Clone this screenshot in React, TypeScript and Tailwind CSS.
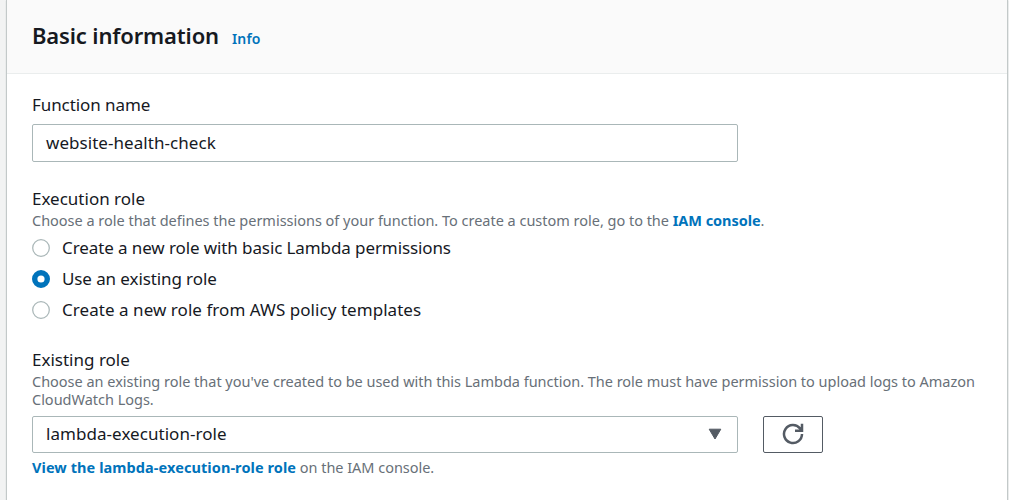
const options = [
  { label: 'Create a new role with basic Lambda permissions', checked: false, tracking: 'tracking-[-0.1px]' },
  { label: 'Use an existing role', checked: true, tracking: 'tracking-[-0.1px]' },
  { label: 'Create a new role from AWS policy templates', checked: false, tracking: 'tracking-[0.05px]' },
];

function Radio({ checked }: { checked: boolean }) {
  return (
    <svg className="mt-px h-[18px] w-[18px] shrink-0" viewBox="0 0 18 18">
      {checked ? (
        <circle cx="9" cy="9" r="6.300" fill="#fff" stroke="#0073bb" strokeWidth="5.400" />
      ) : (
        <circle cx="9" cy="9" r="8.300" fill="#fff" stroke="#aab7b8" strokeWidth="1.250" />
      )}
    </svg>
  );
}

export default function App() {
  return (
    <div className="flex h-[500px] w-[1009px] overflow-hidden bg-[#f2f3f3] font-['Noto_Sans','Open_Sans',sans-serif] text-[#16191f]">
      <main className="ml-[6px] flex w-[1002px] flex-col border-x border-[#c3c9c9] bg-white shadow-[0_1px_1px_0_rgba(0,28,36,0.2)]">
        <header className="flex h-[74px] items-baseline gap-[13px] border-b border-[#eaeded] bg-[#fafafa] pl-[25px] pt-[19px]">
          <h2 className="text-[22px] leading-[32px] font-semibold tracking-[-0.15px]">Basic information</h2>
          <a className="text-[14px] font-semibold tracking-[0.15px] text-[#0073bb]">Info</a>
        </header>
        <section className="flex flex-col pl-[25px] pt-[18px] whitespace-nowrap">
          <label className="text-[17px] leading-[26px] tracking-[-0.07px]">Function name</label>
          <div className="mt-[6px] flex h-[38px] w-[706px] items-center rounded-[2px] border border-[#aab7b8] pl-[13px] text-[17px] tracking-[0.05px]">
            website-health-check
          </div>

          <div className="mt-6 text-[17px] leading-[26px]">Execution role</div>
          <p className="-mt-px mb-px text-[14.5px] leading-[18px] tracking-[-0.015px] text-[#687078]">
            <span>Choose a role that defines the permissions of your function. To create a custom role, go to the </span>
            <a className="font-bold tracking-[-0.05px] text-[#0073bb]">IAM console</a>.
          </p>
          <div className="mt-[2px] flex h-[94px] flex-col">
            {options.map((o) => (
              <div key={o.label} className="flex h-[31.2px] items-center gap-3 text-[17px]">
                <Radio checked={o.checked} />
                <span className={o.tracking}>{o.label}</span>
              </div>
            ))}
          </div>

          <div className="mt-[21px] text-[17px] leading-[26px]">Existing role</div>
          <p className="-mt-px mb-px text-[14.5px] leading-[18px] tracking-[-0.015px] text-[#687078]">
            <span>Choose an existing role that you've created to be used with this Lambda function. The role must have permission to upload logs to Amazon</span>
            <br />
            <span>CloudWatch Logs.</span>
          </p>
          <div className="mt-[7px] flex gap-[25px]">
            <div className="flex h-[37px] w-[706px] items-center justify-between rounded-[2px] border border-[#aab7b8] pl-[13px] pr-[15px] text-[17px]">
              <span className="pb-[2px] tracking-[0.05px]">lambda-execution-role</span>
              <svg className="mb-px" width="14" height="12" viewBox="0 0 14 12" fill="#545b64">
                <path d="M1.200 1.200h11.600L7 11z" stroke="#545b64" strokeLinejoin="round" />
              </svg>
            </div>
            <button className="flex h-[37px] w-[60px] items-center justify-center rounded-[2px] border border-[#545b64]">
              <svg className="mb-px" width="22" height="22" viewBox="0 0 22 22" fill="none" stroke="#545b64" strokeWidth="2.500">
                <path d="M20 11a9 9 0 1 1-2-5.660l1.600 2.200M20 .8v7h-7" />
              </svg>
            </button>
          </div>
          <p className="mt-[5px] text-[14.5px] leading-[18px] tracking-[-0.03px] text-[#687078]">
            <a className="font-bold tracking-[0.08px] text-[#0073bb]">View the lambda-execution-role role</a>
            <span> on the IAM console.</span>
          </p>
        </section>
      </main>
    </div>
  );
}
